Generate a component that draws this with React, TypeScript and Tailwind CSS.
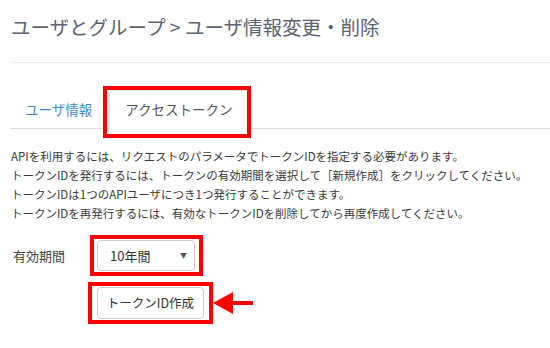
import React from "react";

export default function App() {
  return (
    <div
      className="relative w-[550px] h-[348px] overflow-hidden bg-white text-[#444]"
      style={{ fontFamily: '"Noto Sans CJK JP", "Noto Sans", sans-serif' }}
    >
      <div className="h-[62px] pt-[13px] pl-[11px] text-[19.5px] leading-[28px] text-[#5b6370] whitespace-nowrap">
        ユーザとグループ &gt; ユーザ情報変更・削除
      </div>
      <div className="ml-[10px] h-px bg-[#ebebeb]" />

      <div className="ml-[10px] mt-[27px] h-[39px] border-b border-[#dddddd] flex items-end">
        <div className="h-[38px] px-[15px] mr-[2px] flex items-center text-[13.5px] text-[#3d8ad0]">
          ユーザ情報
        </div>
        <div className="relative h-[39px] -mb-px px-[15px] flex items-center bg-white border border-[#dddddd] border-b-white rounded-t-[4px] text-[13.5px] text-[#555]">
          アクセストークン
          <div className="absolute left-[-7px] right-[-3px] top-[-5px] bottom-[-10px] border-[4px] border-[#ff0000]" />
        </div>
      </div>

      <div className="mt-[18px] pl-[11px] text-[11.5px] leading-[19px] text-[#3a3a3a] whitespace-nowrap">
        <div>APIを利用するには、リクエストのパラメータでトークンIDを指定する必要があります。</div>
        <div>トークンIDを発行するには、トークンの有効期間を選択して［新規作成］をクリックしてください。</div>
        <div>トークンIDは1つのAPIユーザにつき1つ発行することができます。</div>
        <div>トークンIDを再発行するには、有効なトークンIDを削除してから再度作成してください。</div>
      </div>

      <div className="mt-[17px] flex items-center pl-[13px]">
        <div className="w-[84px] text-[13px] text-[#444]">有効期間</div>
        <div className="relative w-[98px] h-[31px] border border-[#cccccc] rounded-[4px] flex items-center justify-between pl-[12px] pr-[7px] text-[13px] text-[#333]">
          <span>10年間</span>
          <span className="text-[7px] text-[#555]">▼</span>
          <div className="absolute left-[-8px] right-[-9px] top-[-6px] bottom-[-6px] border-[4px] border-[#ff0000]" />
        </div>
      </div>

      <div className="mt-[16px] pl-[97px] flex">
        <div className="relative w-[107px] h-[32px] border border-[#cccccc] rounded-[4px] bg-white flex items-center justify-center text-[12.5px] text-[#333]">
          トークンID作成
          <div className="absolute left-[-10px] right-[-10px] top-[-6px] bottom-[-6px] border-[4px] border-[#ff0000]" />
          <svg
            className="absolute left-[calc(100%+10px)] top-1/2 -translate-y-1/2"
            width="40"
            height="24"
            viewBox="0 0 40 24"
          >
            <polygon points="0,12 20,1 20,23" fill="#ff0000" />
            <rect x="18" y="10" width="22" height="4" fill="#ff0000" />
          </svg>
        </div>
      </div>
    </div>
  );
}
